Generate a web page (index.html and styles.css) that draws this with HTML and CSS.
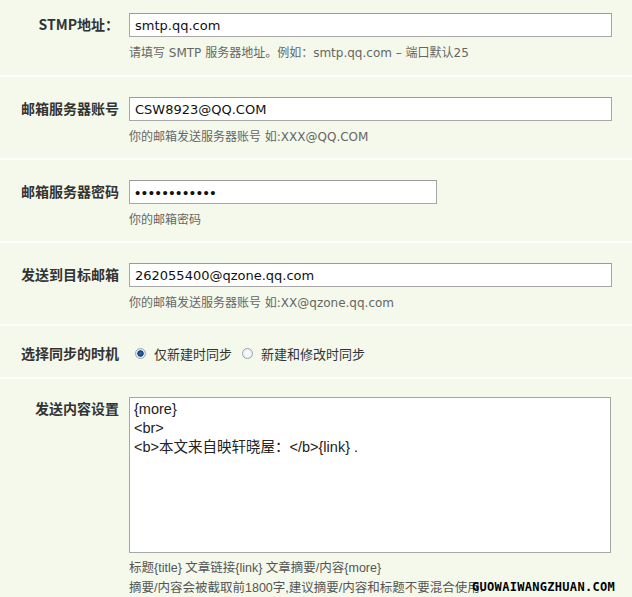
FILE: index.html
```html
<!DOCTYPE html>
<html>

<head>
    <title>邮件同步设置</title>
    <link rel="stylesheet" href="styles.css">
</head>

<body>
    <div class="settings">
        <div class="row first">
            <label class="row-label" for="smtpHost">STMP地址：</label>
            <div class="row-field">
                <input type="text" class="text-input" id="smtpHost" value="smtp.qq.com">
                <p class="help">请填写 SMTP 服务器地址。例如：smtp.qq.com – 端口默认25</p>
            </div>
        </div>
        <div class="row">
            <label class="row-label" for="smtpUser">邮箱服务器账号</label>
            <div class="row-field">
                <input type="text" class="text-input" id="smtpUser" value="CSW8923@QQ.COM">
                <p class="help">你的邮箱发送服务器账号 如:XXX@QQ.COM</p>
            </div>
        </div>
        <div class="row">
            <label class="row-label" for="smtpPass">邮箱服务器密码</label>
            <div class="row-field">
                <input type="password" class="text-input short" id="smtpPass" value="123456789012">
                <p class="help">你的邮箱密码</p>
            </div>
        </div>
        <div class="row">
            <label class="row-label" for="mailTo">发送到目标邮箱</label>
            <div class="row-field">
                <input type="text" class="text-input" id="mailTo" value="262055400@qzone.qq.com">
                <p class="help">你的邮箱发送服务器账号 如:XX@qzone.qq.com</p>
            </div>
        </div>
        <div class="row compact">
            <span class="row-label">选择同步的时机</span>
            <div class="row-field radios">
                <label class="radio"><input type="radio" name="syncTime" checked> 仅新建时同步</label>
                <label class="radio"><input type="radio" name="syncTime"> 新建和修改时同步</label>
            </div>
        </div>
        <div class="row last">
            <label class="row-label" for="mailBody">发送内容设置</label>
            <div class="row-field">
                <textarea class="text-area" id="mailBody">{more}
&lt;br&gt;
&lt;b&gt;本文来自映轩晓屋：&lt;/b&gt;{link} .</textarea>
                <p class="help notes">标题{title} 文章链接{link} 文章摘要/内容{more}<br>摘要/内容会被截取前1800字,建议摘要/内容和标题不要混合使用.</p>
            </div>
        </div>
        <div class="watermark">GUOWAIWANGZHUAN.COM</div>
    </div>
</body>

</html>
```

FILE: styles.css
```css
body {
    margin: 0;
    padding: 0;
    background-color: #fff;
    font-family: "DejaVu Sans", "Noto Sans CJK SC", sans-serif;
    font-size: 13px;
    color: #222;
}

.settings {
    position: relative;
    background-color: #f4f9eb;
}

.row {
    display: flex;
    align-items: flex-start;
    padding: 20px 0 13px;
    border-bottom: 2px solid #fcfef8;
}

.row.first {
    padding-top: 13px;
    padding-bottom: 14px;
}

.row.compact {
    padding: 16px 0 12px;
}

.row.last {
    padding-top: 18px;
    padding-bottom: 0;
    border-bottom: none;
}

.row-label {
    width: 119px;
    flex: none;
    text-align: right;
    font-family: "Noto Sans CJK SC", sans-serif;
    font-weight: bold;
    font-size: 14px;
    line-height: 23px;
    color: #333;
}

.row-field {
    margin-left: 10px;
    flex: 1;
}

.text-input {
    display: block;
    box-sizing: border-box;
    width: 483px;
    height: 24px;
    margin: 0;
    padding: 0 5px;
    border: 1px solid #a7a7a7;
    border-top-color: #9a9a9a;
    background: #fff;
    font-family: "DejaVu Sans", sans-serif;
    font-size: 13px;
    color: #111;
}

.text-input.short {
    width: 308px;
    font-family: "Liberation Sans", sans-serif;
    font-size: 15px;
    letter-spacing: 1.6px;
}

.help {
    margin: 8px 0 0;
    font-family: "DejaVu Sans", "Noto Sans CJK SC", sans-serif;
    font-size: 12px;
    line-height: 16px;
    color: #666;
}

.help.notes {
    margin-top: 5px;
    font-family: "Liberation Sans", "Noto Sans CJK SC", sans-serif;
    font-size: 12.5px;
    line-height: 20px;
    color: #555;
}

/* radio row */
.radios {
    display: flex;
    align-items: center;
    height: 23px;
    font-family: "Noto Sans CJK SC", sans-serif;
    font-size: 13px;
    color: #333;
}

.radio {
    display: flex;
    align-items: center;
    margin-right: 4px;
}

.radio input {
    appearance: none;
    -webkit-appearance: none;
    width: 11px;
    height: 11px;
    margin: 0 8px 0 6px;
    border: 1px solid #9aa5b0;
    border-radius: 50%;
    background: radial-gradient(circle, #fff 0%, #e4e6e8 100%);
}

.radio input:checked {
    background: radial-gradient(circle, #2d6fb8 0%, #143f78 45%, #dfe6ee 55%, #fff 100%);
}

.text-area {
    display: block;
    box-sizing: border-box;
    width: 482px;
    height: 156px;
    margin: 0;
    padding: 2px 4px;
    border: 1px solid #a7a7a7;
    background: #fff;
    resize: none;
    font-family: "Liberation Sans", "Noto Sans CJK SC", sans-serif;
    font-size: 14.5px;
    line-height: 19px;
    color: #222;
}

.watermark {
    position: absolute;
    right: 17px;
    bottom: 4px;
    font-family: "DejaVu Sans Mono", monospace;
    font-weight: bold;
    font-size: 12px;
    letter-spacing: 0.3px;
    color: #000;
}
```
